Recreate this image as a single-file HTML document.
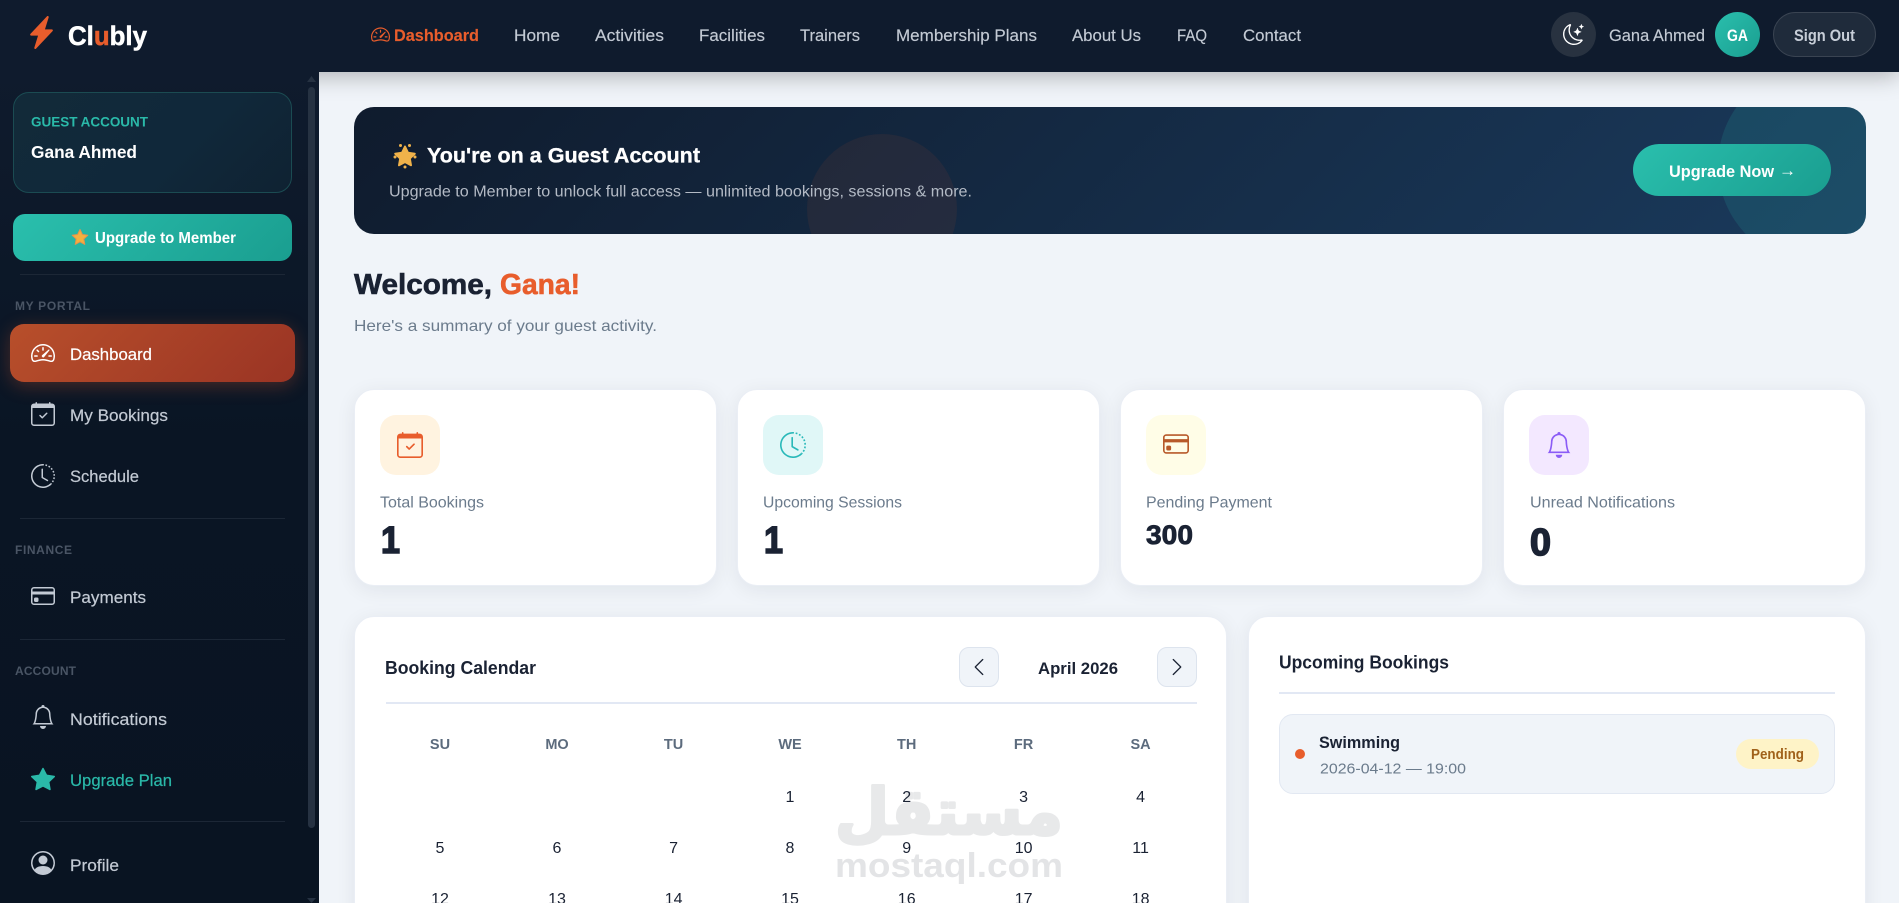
<!DOCTYPE html>
<html lang="en"><head><meta charset="utf-8"><title>Clubly</title>
<style>
html,body{margin:0;padding:0;width:1899px;height:903px;overflow:hidden;background:#f0f4f9}
#P{position:relative;width:1899px;height:903px;overflow:hidden;background:#f0f4f9}
.a{position:absolute;box-sizing:border-box}
svg{position:absolute;overflow:visible}
#T{left:0;top:0;width:1899px;height:903px;z-index:10;pointer-events:none;overflow:hidden}
#T text{font-family:"Liberation Sans",Arial,sans-serif;white-space:pre}
.b{font-weight:700}
.card{background:#fff;border:1px solid #eaeef5;box-shadow:0 4px 20px rgba(15,27,45,.07)}
</style></head><body><div id="P">
<svg width="0" height="0" style="position:absolute"><defs>
<symbol id="bolt" viewBox="0 0 16 16"><path d="M11.251.068a.5.5 0 0 1 .227.58L9.677 6.5H13a.5.5 0 0 1 .364.843l-8 8.5a.5.5 0 0 1-.842-.49L6.323 9.5H3a.5.5 0 0 1-.364-.843l8-8.5a.5.5 0 0 1 .615-.09z"/></symbol>
<symbol id="speed" viewBox="0 0 16 16"><path d="M8 4a.5.5 0 0 1 .5.5V6a.5.5 0 0 1-1 0V4.5A.5.5 0 0 1 8 4zM3.732 5.732a.5.5 0 0 1 .707 0l.915.914a.5.5 0 1 1-.708.708l-.914-.915a.5.5 0 0 1 0-.707zM2 10a.5.5 0 0 1 .5-.5h1.586a.5.5 0 0 1 0 1H2.5A.5.5 0 0 1 2 10zm9.5 0a.5.5 0 0 1 .5-.5h1.5a.5.5 0 0 1 0 1H12a.5.5 0 0 1-.5-.5zm.754-4.246a.389.389 0 0 0-.527-.02L7.547 9.31a.91.91 0 1 0 1.302 1.258l3.434-4.297a.389.389 0 0 0-.029-.518z"/><path fill-rule="evenodd" d="M0 10a8 8 0 1 1 15.547 2.661c-.442 1.253-1.845 1.602-2.932 1.25C11.309 13.488 9.475 13 8 13c-1.474 0-3.31.488-4.615.911-1.087.352-2.49.003-2.932-1.25A7.988 7.988 0 0 1 0 10zm8-7a7 7 0 0 0-6.603 9.329c.203.575.923.876 1.68.63C4.397 12.533 6.358 12 8 12s3.604.532 4.923.96c.757.245 1.477-.056 1.68-.631A7 7 0 0 0 8 3z"/></symbol>
<symbol id="cal" viewBox="0 0 16 16"><path d="M10.854 7.146a.5.5 0 0 1 0 .708l-3 3a.5.5 0 0 1-.708 0l-1.5-1.5a.5.5 0 1 1 .708-.708L7.5 9.793l2.646-2.647a.5.5 0 0 1 .708 0z"/><path d="M3.5 0a.5.5 0 0 1 .5.5V1h8V.5a.5.5 0 0 1 1 0V1h1a2 2 0 0 1 2 2v11a2 2 0 0 1-2 2H2a2 2 0 0 1-2-2V3a2 2 0 0 1 2-2h1V.5a.5.5 0 0 1 .5-.5zM1 4v10a1 1 0 0 0 1 1h12a1 1 0 0 0 1-1V4H1z"/></symbol>
<symbol id="clock" viewBox="0 0 16 16"><path d="M8.515 1.019A7 7 0 0 0 8 1V0a8 8 0 0 1 .589.022l-.074.997zm2.004.45a7.003 7.003 0 0 0-.985-.299l.219-.976c.383.086.76.2 1.126.342l-.36.933zm1.37.71a7.01 7.01 0 0 0-.439-.27l.493-.87a8.025 8.025 0 0 1 .979.654l-.615.789a6.996 6.996 0 0 0-.418-.302zm1.834 1.79a6.99 6.99 0 0 0-.653-.796l.724-.69c.27.285.52.59.747.91l-.818.576zm.744 1.352a7.08 7.08 0 0 0-.214-.468l.893-.45a7.976 7.976 0 0 1 .45 1.088l-.95.313a7.023 7.023 0 0 0-.179-.483zm.53 2.507a6.991 6.991 0 0 0-.1-1.025l.985-.17c.067.386.106.778.116 1.17l-1 .025zm-.131 1.538c.033-.17.06-.339.081-.51l.993.123a7.957 7.957 0 0 1-.23 1.155l-.964-.267c.046-.165.086-.332.12-.501zm-.952 2.379c.184-.29.346-.594.486-.908l.914.405c-.16.36-.345.706-.555 1.038l-.845-.535zm-.964 1.205c.122-.122.239-.248.35-.378l.758.653a8.073 8.073 0 0 1-.401.432l-.707-.707z"/><path d="M8 1a7 7 0 1 0 4.95 11.95l.707.707A8.001 8.001 0 1 1 8 0v1z"/><path d="M7.5 3a.5.5 0 0 1 .5.5v5.21l3.248 1.856a.5.5 0 0 1-.496.868l-3.5-2A.5.5 0 0 1 7 9V3.5a.5.5 0 0 1 .5-.5z"/></symbol>
<symbol id="ccard" viewBox="0 0 16 16"><path d="M0 4a2 2 0 0 1 2-2h12a2 2 0 0 1 2 2v8a2 2 0 0 1-2 2H2a2 2 0 0 1-2-2V4zm2-1a1 1 0 0 0-1 1v1h14V4a1 1 0 0 0-1-1H2zm13 4H1v5a1 1 0 0 0 1 1h12a1 1 0 0 0 1-1V7z"/><path d="M2 10a1 1 0 0 1 1-1h1a1 1 0 0 1 1 1v1a1 1 0 0 1-1 1H3a1 1 0 0 1-1-1v-1z"/></symbol>
<symbol id="bell" viewBox="0 0 16 16"><path d="M8 16a2 2 0 0 0 2-2H6a2 2 0 0 0 2 2zM8 1.918l-.797.161A4.002 4.002 0 0 0 4 6c0 .628-.134 2.197-.459 3.742-.16.767-.376 1.566-.663 2.258h10.244c-.287-.692-.502-1.49-.663-2.258C12.134 8.197 12 6.628 12 6a4.002 4.002 0 0 0-3.203-3.92L8 1.917zM14.22 12c.223.447.481.801.78 1H1c.299-.199.557-.553.78-1C2.68 10.2 3 6.88 3 6c0-2.42 1.72-4.44 4.005-4.901a1 1 0 1 1 1.99 0A5.002 5.002 0 0 1 13 6c0 .88.32 4.2 1.22 6z"/></symbol>
<symbol id="star" viewBox="0 0 16 16"><path d="M3.612 15.443c-.386.198-.824-.149-.746-.592l.83-4.73L.173 6.765c-.329-.314-.158-.888.283-.95l4.898-.696L7.538.792c.197-.39.73-.39.927 0l2.184 4.327 4.898.696c.441.062.612.636.282.95l-3.522 3.356.83 4.73c.078.443-.36.79-.746.592L8 13.187l-4.389 2.256z"/></symbol>
<symbol id="person" viewBox="0 0 16 16"><path d="M11 6a3 3 0 1 1-6 0 3 3 0 0 1 6 0z"/><path fill-rule="evenodd" d="M0 8a8 8 0 1 1 16 0A8 8 0 0 1 0 8zm8-7a7 7 0 0 0-5.468 11.37C3.242 11.226 4.805 10 8 10s4.757 1.225 5.468 2.37A7 7 0 0 0 8 1z"/></symbol>
<symbol id="moon" viewBox="0 0 16 16"><path d="M6 .278a.768.768 0 0 1 .08.858 7.208 7.208 0 0 0-.878 3.46c0 4.021 3.278 7.277 7.318 7.277.527 0 1.04-.055 1.533-.16a.787.787 0 0 1 .81.316.733.733 0 0 1-.031.893A8.349 8.349 0 0 1 8.344 16C3.734 16 0 12.286 0 7.71 0 4.266 2.114 1.312 5.124.06A.751.751 0 0 1 6 .278zM4.858 1.311A7.269 7.269 0 0 0 1.025 7.71c0 4.02 3.279 7.276 7.319 7.276a7.316 7.316 0 0 0 5.205-2.162c-.337.042-.68.063-1.029.063-4.61 0-8.343-3.714-8.343-8.29 0-1.167.242-2.278.681-3.286z"/><path d="M10.794 3.148a.217.217 0 0 1 .412 0l.387 1.162c.173.518.579.924 1.097 1.097l1.162.387a.217.217 0 0 1 0 .412l-1.162.387a1.734 1.734 0 0 0-1.097 1.097l-.387 1.162a.217.217 0 0 1-.412 0l-.387-1.162A1.734 1.734 0 0 0 9.31 6.593l-1.162-.387a.217.217 0 0 1 0-.412l1.162-.387a1.734 1.734 0 0 0 1.097-1.097l.387-1.162zM13.863.099a.145.145 0 0 1 .274 0l.258.774c.115.346.386.617.732.732l.774.258a.145.145 0 0 1 0 .274l-.774.258a1.156 1.156 0 0 0-.732.732l-.258.774a.145.145 0 0 1-.274 0l-.258-.774a1.156 1.156 0 0 0-.732-.732l-.774-.258a.145.145 0 0 1 0-.274l.774-.258c.346-.115.617-.386.732-.732L13.863.1z"/></symbol>
<symbol id="cl" viewBox="0 0 16 16"><path d="M11.354 1.646a.5.5 0 0 1 0 .708L5.707 8l5.647 5.646a.5.5 0 0 1-.708.708l-6-6a.5.5 0 0 1 0-.708l6-6a.5.5 0 0 1 .708 0z"/></symbol>
<symbol id="cr" viewBox="0 0 16 16"><path d="M4.646 1.646a.5.5 0 0 1 .708 0l6 6a.5.5 0 0 1 0 .708l-6 6a.5.5 0 0 1-.708-.708L10.293 8 4.646 2.354a.5.5 0 0 1 0-.708z"/></symbol>
</defs></svg>

<!-- top bar -->
<div class="a" style="left:0;top:0;width:1899px;height:72px;background:#0f1b2d;box-shadow:0 4px 22px rgba(0,0,0,.28);z-index:2"></div>
<div class="a" style="left:1551px;top:12px;width:45px;height:45px;border-radius:50%;background:#283240;z-index:3"></div>
<div class="a" style="left:1715px;top:12px;width:45px;height:45px;border-radius:50%;background:linear-gradient(135deg,#2abfad,#1a9e90);z-index:3"></div>
<div class="a" style="left:1773px;top:12px;width:103px;height:45px;border-radius:23px;background:#1f2b3b;border:1px solid #3a4452;z-index:3"></div>

<!-- sidebar -->
<div class="a" style="left:0;top:72px;width:319px;height:831px;background:linear-gradient(180deg,#0f1b2d 0%,#0a1524 45%,#091422 100%);z-index:3">
  <div class="a" style="left:13px;top:20px;width:279px;height:101px;border-radius:16px;border:1px solid #1b4b52;background:linear-gradient(135deg,#122a39,#10283a 60%,#0f2232)"></div>
  <div class="a" style="left:13px;top:142px;width:279px;height:47px;border-radius:12px;background:linear-gradient(135deg,#2abfad,#1a9e90)"></div>
  <div class="a" style="left:20px;top:202px;width:265px;height:1px;background:#1c2736"></div>
  <div class="a" style="left:10px;top:252px;width:285px;height:58px;border-radius:14px;background:linear-gradient(135deg,#b84f2b,#9a3424);box-shadow:0 4px 18px rgba(232,93,44,.28)"></div>
  <div class="a" style="left:20px;top:446px;width:265px;height:1px;background:#1c2736"></div>
  <div class="a" style="left:20px;top:567px;width:265px;height:1px;background:#1c2736"></div>
  <div class="a" style="left:20px;top:749px;width:265px;height:1px;background:#1c2736"></div>
  <div class="a" style="left:308px;top:15px;width:7px;height:741px;border-radius:4px;background:#263242"></div>
  <svg style="left:307px;top:4px" width="9" height="6"><path d="M4.5 0L9 6H0z" fill="#263242"/></svg>
  <svg style="left:307px;top:826px" width="9" height="5"><path d="M0 0h9L4.500 5z" fill="#263242"/></svg>
</div>

<!-- banner -->
<div class="a" style="left:354px;top:107px;width:1512px;height:127px;border-radius:20px;overflow:hidden;background:linear-gradient(135deg,#0f1b2d 0%,#1a3a5c 100%)">
  <div class="a" style="left:1364px;top:-42px;width:200px;height:200px;border-radius:50%;background:rgba(42,191,173,.15)"></div>
  <div class="a" style="left:453px;top:27px;width:150px;height:150px;border-radius:50%;background:rgba(232,93,44,.08)"></div>
  <div class="a" style="left:1279px;top:37px;width:198px;height:52px;border-radius:26px;background:linear-gradient(135deg,#2abfad,#1a9e90)"></div>
</div>

<!-- stat cards -->
<div class="a card" style="left:354px;top:389px;width:363px;height:197px;border-radius:20px"></div>
<div class="a card" style="left:737px;top:389px;width:363px;height:197px;border-radius:20px"></div>
<div class="a card" style="left:1120px;top:389px;width:363px;height:197px;border-radius:20px"></div>
<div class="a card" style="left:1503px;top:389px;width:363px;height:197px;border-radius:20px"></div>
<div class="a" style="left:380px;top:415px;width:60px;height:60px;border-radius:16px;background:#fff3e0"></div>
<div class="a" style="left:763px;top:415px;width:60px;height:60px;border-radius:16px;background:#e0f7f7"></div>
<div class="a" style="left:1146px;top:415px;width:60px;height:60px;border-radius:16px;background:#fffde7"></div>
<div class="a" style="left:1529px;top:415px;width:60px;height:60px;border-radius:16px;background:#f3e8ff"></div>

<!-- lower cards -->
<div class="a card" style="left:354px;top:616px;width:873px;height:320px;border-radius:20px"></div>
<div class="a card" style="left:1248px;top:616px;width:618px;height:320px;border-radius:20px"></div>
<div class="a" style="left:959px;top:647px;width:40px;height:40px;border-radius:10px;background:#f0f4f9;border:1px solid #dde4ee"></div>
<div class="a" style="left:1157px;top:647px;width:40px;height:40px;border-radius:10px;background:#f0f4f9;border:1px solid #dde4ee"></div>
<div class="a" style="left:386px;top:702px;width:811px;height:2px;background:#e2e8f4"></div>
<div class="a" style="left:1279px;top:692px;width:556px;height:2px;background:#e2e8f4"></div>
<div class="a" style="left:1279px;top:714px;width:556px;height:80px;border-radius:14px;background:#f0f4f9;border:1px solid #e2e8f2"></div>
<div class="a" style="left:1295px;top:749px;width:10px;height:10px;border-radius:50%;background:#e85d2c"></div>
<div class="a" style="left:1736px;top:739px;width:83px;height:30px;border-radius:15px;background:#fef3c7"></div>

<svg id="T" viewBox="0 0 1899 903">
  <!-- logo -->
  <use href="#bolt" x="25" y="16" width="33" height="33" fill="#e85d2c"/>
  <text class="b" x="68" y="45" font-size="27" fill="#fff" stroke="#fff" stroke-width=".5" textLength="79" lengthAdjust="spacingAndGlyphs">Cl<tspan fill="#e85d2c" stroke="#e85d2c">u</tspan>bly</text>
  <!-- nav -->
  <use href="#speed" x="371" y="25" width="19" height="19" fill="#e85d2c"/>
  <g font-size="17" fill="#c3cad4" stroke="#c3cad4" stroke-width=".15">
  <text class="b" x="394" y="41" fill="#e85d2c" stroke="#e85d2c" textLength="85" lengthAdjust="spacingAndGlyphs">Dashboard</text>
  <text x="514" y="41" textLength="46" lengthAdjust="spacingAndGlyphs">Home</text>
  <text x="595" y="41" textLength="69" lengthAdjust="spacingAndGlyphs">Activities</text>
  <text x="699" y="41" textLength="66" lengthAdjust="spacingAndGlyphs">Facilities</text>
  <text x="800" y="41" textLength="60" lengthAdjust="spacingAndGlyphs">Trainers</text>
  <text x="896" y="41" textLength="141" lengthAdjust="spacingAndGlyphs">Membership Plans</text>
  <text x="1072" y="41" textLength="69" lengthAdjust="spacingAndGlyphs">About Us</text>
  <text x="1177" y="41" textLength="30" lengthAdjust="spacingAndGlyphs">FAQ</text>
  <text x="1243" y="41" textLength="58" lengthAdjust="spacingAndGlyphs">Contact</text>
  <text x="1609" y="41" textLength="96" lengthAdjust="spacingAndGlyphs">Gana Ahmed</text>
  </g>
  <use href="#moon" x="1563" y="24" width="21" height="21" fill="#fff"/>
  <text class="b" x="1727" y="41" font-size="17" fill="#fff" textLength="21" lengthAdjust="spacingAndGlyphs">GA</text>
  <text class="b" x="1794" y="41" font-size="16.500" fill="#c7ced8" textLength="61" lengthAdjust="spacingAndGlyphs">Sign Out</text>

  <!-- sidebar text -->
  <text class="b" x="31" y="126.500" font-size="13.500" fill="#2ab9a9" textLength="117" lengthAdjust="spacing">GUEST ACCOUNT</text>
  <text class="b" x="31" y="158" font-size="17.500" fill="#fff" textLength="106" lengthAdjust="spacingAndGlyphs">Gana Ahmed</text>
  <path d="M80 229.500l2.400 5 5.400.7-4 3.800 1 5.400-4.800-2.600-4.800 2.600 1-5.400-4-3.800 5.400-.7z" fill="#f4b13f" stroke="#e8934a" stroke-width="1" stroke-linejoin="round"/>
  <text class="b" x="95" y="243" font-size="15.500" fill="#fff" textLength="141" lengthAdjust="spacingAndGlyphs">Upgrade to Member</text>
  <g class="b" font-size="12" fill="#4a5565">
  <text class="b" x="15" y="310" textLength="75" lengthAdjust="spacing">MY PORTAL</text>
  <text class="b" x="15" y="554" textLength="57" lengthAdjust="spacing">FINANCE</text>
  <text class="b" x="15" y="675" textLength="61" lengthAdjust="spacing">ACCOUNT</text>
  </g>
  <use href="#speed" x="31" y="341" width="24" height="24" fill="#fff"/>
  <use href="#cal" x="31" y="402" width="24" height="24" fill="#c3cad4"/>
  <use href="#clock" x="31" y="464" width="24" height="24" fill="#c3cad4"/>
  <use href="#ccard" x="31" y="584" width="24" height="24" fill="#c3cad4"/>
  <use href="#bell" x="31" y="705" width="24" height="24" fill="#c3cad4"/>
  <use href="#star" x="31" y="767" width="24" height="24" fill="#2ab9a9"/>
  <use href="#person" x="31" y="851" width="24" height="24" fill="#c3cad4"/>
  <g font-size="17" fill="#c3cad4" stroke="#c3cad4" stroke-width=".2">
  <text x="70" y="360" fill="#fff" stroke="#fff" textLength="82" lengthAdjust="spacingAndGlyphs">Dashboard</text>
  <text x="70" y="421" textLength="98" lengthAdjust="spacingAndGlyphs">My Bookings</text>
  <text x="70" y="482" textLength="69" lengthAdjust="spacingAndGlyphs">Schedule</text>
  <text x="70" y="603" textLength="76" lengthAdjust="spacingAndGlyphs">Payments</text>
  <text x="70" y="725" textLength="97" lengthAdjust="spacingAndGlyphs">Notifications</text>
  <text x="70" y="786" fill="#2ab9a9" stroke="#2ab9a9" textLength="102" lengthAdjust="spacingAndGlyphs">Upgrade Plan</text>
  <text x="70" y="871" textLength="49" lengthAdjust="spacingAndGlyphs">Profile</text>
  </g>

  <!-- banner text -->
  <g fill="#f0b24a"><path d="M405 146.500l3 6.300 6.800.9-5 4.800 1.200 6.800-6-3.300-6 3.300 1.200-6.800-5-4.800 6.800-.9z" stroke="#f0b24a" stroke-width="2" stroke-linejoin="round"/><circle cx="400.500" cy="145.500" r="1.500"/><circle cx="409.500" cy="145.500" r="1.500"/><circle cx="395" cy="157" r="1.500"/><circle cx="415" cy="157" r="1.500"/><circle cx="405" cy="167" r="1.500"/></g>
  <text class="b" x="427" y="162.500" font-size="21" fill="#fff" stroke="#fff" stroke-width=".3" textLength="273" lengthAdjust="spacingAndGlyphs">You're on a Guest Account</text>
  <text x="389" y="196.500" font-size="15.500" fill="#b3bac5" textLength="583" lengthAdjust="spacingAndGlyphs">Upgrade to Member to unlock full access — unlimited bookings, sessions &amp; more.</text>
  <text class="b" x="1669" y="177" font-size="17" fill="#fff" textLength="105" lengthAdjust="spacingAndGlyphs">Upgrade Now</text>
  <text x="1779" y="176" font-size="17" fill="#fff" textLength="17" lengthAdjust="spacingAndGlyphs">→</text>

  <!-- welcome -->
  <text class="b" x="354" y="294" font-size="29" fill="#1a2233" stroke="#1a2233" stroke-width=".6" textLength="138" lengthAdjust="spacingAndGlyphs">Welcome,</text>
  <text class="b" x="500" y="294" font-size="29" fill="#e85d2c" stroke="#e85d2c" stroke-width=".6" textLength="80" lengthAdjust="spacingAndGlyphs">Gana!</text>
  <text x="354" y="331" font-size="16" fill="#6b7b8c" textLength="303" lengthAdjust="spacingAndGlyphs">Here's a summary of your guest activity.</text>

  <!-- stat icons -->
  <use href="#cal" x="397" y="432" width="26" height="26" fill="#e85d2c"/>
  <use href="#clock" x="780" y="432" width="26" height="26" fill="#2ab9b9"/>
  <use href="#ccard" x="1163" y="431" width="26" height="26" fill="#b85a2a"/>
  <use href="#bell" x="1546" y="432" width="26" height="26" fill="#8b5cf6"/>
  <g font-size="16" fill="#6b7b8c">
  <text x="380" y="507.500" textLength="104" lengthAdjust="spacingAndGlyphs">Total Bookings</text>
  <text x="763" y="507.500" textLength="139" lengthAdjust="spacingAndGlyphs">Upcoming Sessions</text>
  <text x="1146" y="507.500" textLength="126" lengthAdjust="spacingAndGlyphs">Pending Payment</text>
  <text x="1530" y="507.500" textLength="145" lengthAdjust="spacingAndGlyphs">Unread Notifications</text>
  </g>
  <g fill="#1a2233" stroke="#1a2233">
  <text class="b" x="381" y="553" font-size="38" stroke-width="1.600" textLength="19" lengthAdjust="spacingAndGlyphs">1</text>
  <text class="b" x="764" y="553" font-size="38" stroke-width="1.600" textLength="19" lengthAdjust="spacingAndGlyphs">1</text>
  <text class="b" x="1146" y="544" font-size="27" stroke-width=".8" textLength="47" lengthAdjust="spacingAndGlyphs">300</text>
  <text class="b" x="1530" y="555" font-size="38" stroke-width="1.600" textLength="21" lengthAdjust="spacingAndGlyphs">0</text>
  </g>

  <!-- watermark -->
  <text x="949" y="834" text-anchor="middle" style="font-family:'DejaVu Sans',sans-serif" font-weight="700" font-size="64" fill="#e8e9ea" stroke="#e8e9ea" stroke-width="3" stroke-linejoin="round" textLength="228" lengthAdjust="spacingAndGlyphs">مستقل</text>
  <text class="b" x="835" y="877" font-size="34" fill="#e3e4e6" textLength="228" lengthAdjust="spacingAndGlyphs">mostaql.com</text>

  <!-- calendar -->
  <text class="b" x="385" y="674" font-size="18" fill="#1a2233" textLength="151" lengthAdjust="spacingAndGlyphs">Booking Calendar</text>
  <use href="#cl" x="969" y="657" width="20" height="20" fill="#1a2233"/>
  <use href="#cr" x="1167" y="657" width="20" height="20" fill="#1a2233"/>
  <text class="b" x="1038" y="674" font-size="17" fill="#1a2233" textLength="80" lengthAdjust="spacingAndGlyphs">April 2026</text>
  <g class="b" font-size="14.500" fill="#5c6b7d" text-anchor="middle">
  <text class="b" x="440" y="749">SU</text><text class="b" x="557" y="749">MO</text><text class="b" x="673.600" y="749">TU</text><text class="b" x="790" y="749">WE</text><text class="b" x="906.700" y="749">TH</text><text class="b" x="1023.600" y="749">FR</text><text class="b" x="1140.600" y="749">SA</text>
  </g>
  <g font-size="16" fill="#1a2233" text-anchor="middle">
  <text x="790" y="802">1</text><text x="906.700" y="802">2</text><text x="1023.600" y="802">3</text><text x="1140.600" y="802">4</text>
  <text x="440" y="853">5</text><text x="557" y="853">6</text><text x="673.600" y="853">7</text><text x="790" y="853">8</text><text x="906.700" y="853">9</text><text x="1023.600" y="853">10</text><text x="1140.600" y="853">11</text>
  <text x="440" y="904">12</text><text x="557" y="904">13</text><text x="673.600" y="904">14</text><text x="790" y="904">15</text><text x="906.700" y="904">16</text><text x="1023.600" y="904">17</text><text x="1140.600" y="904">18</text>
  </g>

  <!-- upcoming -->
  <text class="b" x="1279" y="668.500" font-size="18.500" fill="#1a2233" textLength="170" lengthAdjust="spacingAndGlyphs">Upcoming Bookings</text>
  <text class="b" x="1319" y="748" font-size="16.500" fill="#1a2233" textLength="81" lengthAdjust="spacingAndGlyphs">Swimming</text>
  <text x="1320" y="773.500" font-size="15" fill="#6b7b8c" textLength="146" lengthAdjust="spacingAndGlyphs">2026-04-12 — 19:00</text>
  <text class="b" x="1751" y="759" font-size="14.500" fill="#a0611a" textLength="53" lengthAdjust="spacingAndGlyphs">Pending</text>
</svg>
</div></body></html>
